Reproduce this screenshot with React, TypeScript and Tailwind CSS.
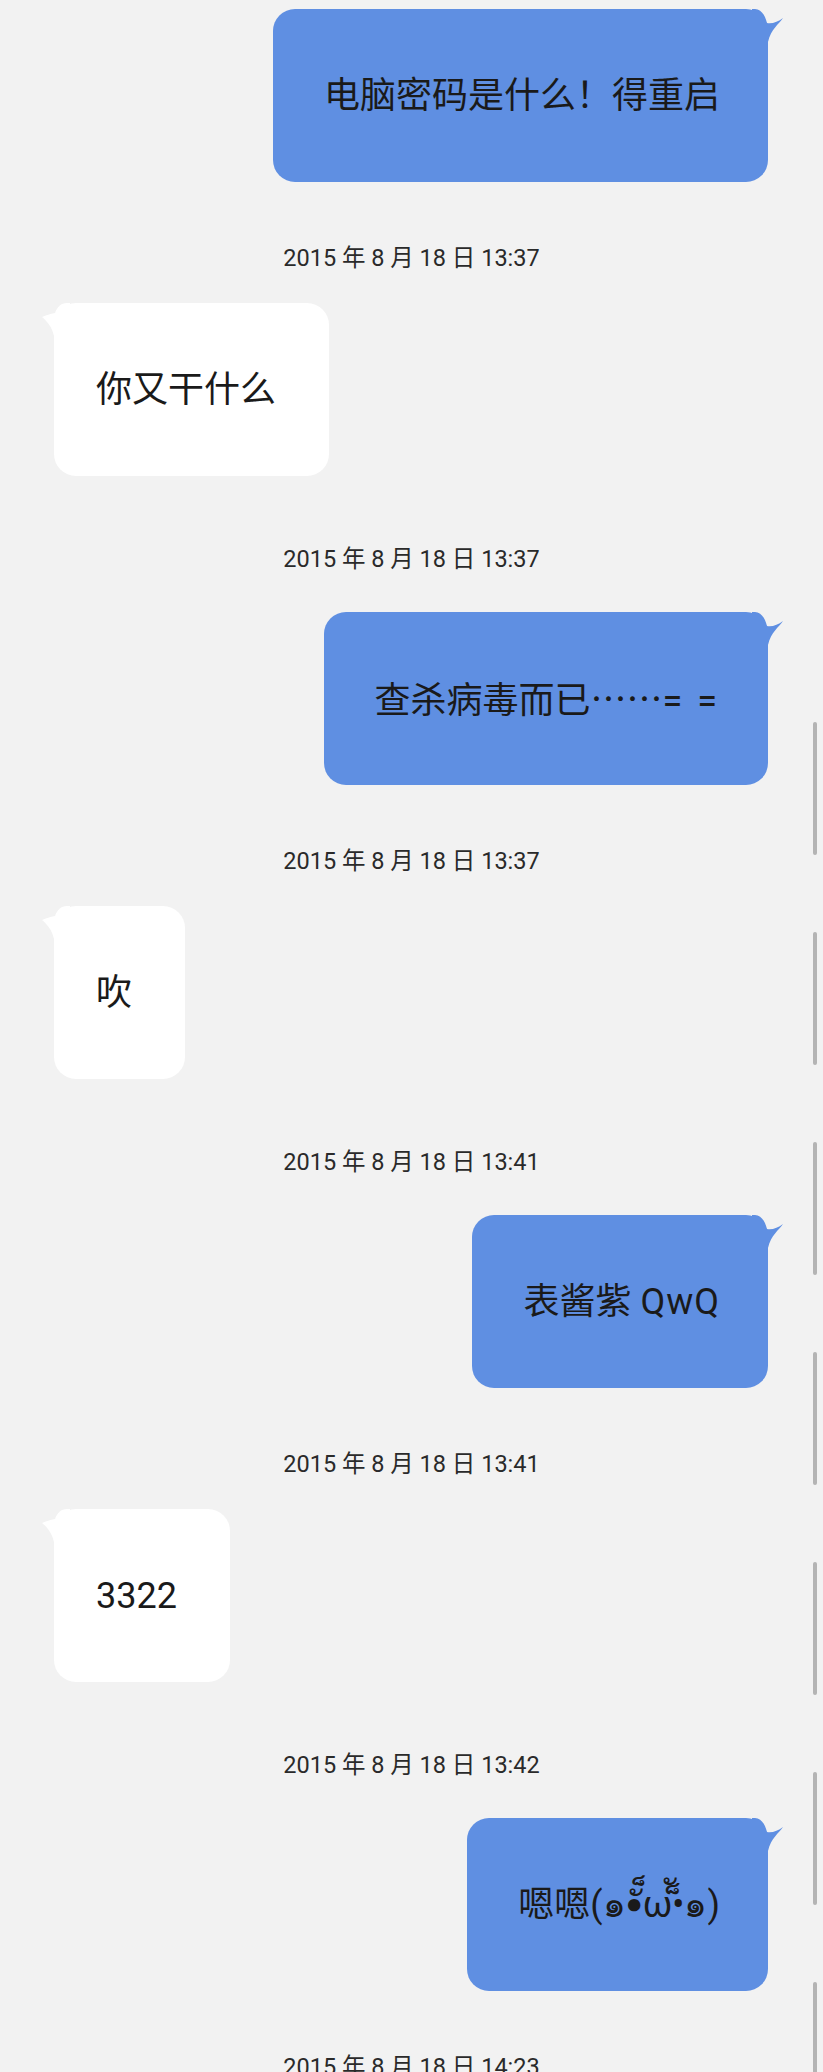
import React from 'react';

type Message = {
  side: 'me' | 'them';
  text: React.ReactNode;
  time: string;
};

const cjk = { fontFamily: '"Noto Sans CJK SC", sans-serif' };

const messages: Message[] = [
  { side: 'me', text: '电脑密码是什么！得重启', time: '2015 年 8 月 18 日 13:37' },
  { side: 'them', text: '你又干什么', time: '2015 年 8 月 18 日 13:37' },
  {
    side: 'me',
    text: (
      <>
        查杀病毒而已<span style={cjk}>……</span>
        <span className="tracking-[3px]">= =</span>
      </>
    ),
    time: '2015 年 8 月 18 日 13:37',
  },
  { side: 'them', text: '吹', time: '2015 年 8 月 18 日 13:41' },
  {
    side: 'me',
    text: (
      <>
        表酱紫 <span className="tracking-[1px]">QwQ</span>
      </>
    ),
    time: '2015 年 8 月 18 日 13:41',
  },
  { side: 'them', text: '3322', time: '2015 年 8 月 18 日 13:42' },
  { side: 'me', text: '嗯嗯(๑•ั็ω•็ั๑)', time: '2015 年 8 月 18 日 14:23' },
];

const MyTail = () => (
  <svg className="absolute top-0 -right-4 h-10 w-8" viewBox="0 0 32 40">
    <path d="M0 0 H3 C9 0 13 6 15 14 C20 15 26 13 31 9 C27 15 19 20 16 33 V40 H0 Z" fill="#5f8fe2" />
  </svg>
);

const TheirTail = () => (
  <svg className="absolute top-0 -left-4 h-10 w-8" viewBox="0 0 32 40">
    <path d="M32 0 H29 C23 0 19 4 17 10 C12 11 8 12 4 14 C9 18 14 24 16 33 V40 H32 Z" fill="#ffffff" />
  </svg>
);

const Bubble = ({ msg, first }: { msg: Message; first: boolean }) => {
  const mine = msg.side === 'me';
  const gap = first ? 'mt-[9px]' : mine ? 'mt-[38px]' : 'mt-[30px]';
  return (
    <div className={`flex ${mine ? 'justify-end pr-[55px]' : 'justify-start pl-[54px]'} ${gap}`}>
      <div
        className={`relative flex h-[173px] items-center rounded-[22px] text-[36px] leading-none text-[#1a1a1a] ${
          mine ? 'bg-[#5f8fe2] pl-[51px] pr-[48px]' : 'bg-white pl-[42px] pr-[53px]'
        }`}
      >
        {mine ? <MyTail /> : <TheirTail />}
        <span className="relative whitespace-nowrap">{msg.text}</span>
      </div>
    </div>
  );
};

export default function App() {
  return (
    <div
      className="relative h-[2072px] overflow-hidden bg-[#f2f2f2]"
      style={{ fontFamily: 'Roboto, "Noto Sans CJK SC", "Noto Sans", sans-serif' }}
    >
      {messages.map((m, i) => (
        <div key={i}>
          <Bubble msg={m} first={i === 0} />
          <div
            className={`h-[30px] text-center text-[23.5px] leading-[30px] text-[#2a2a2a] ${
              m.side === 'me' ? 'mt-[61px]' : 'mt-[68px]'
            }`}
          >
            {m.time}
          </div>
        </div>
      ))}

      {/* scroll indicator, stitched screenshot leftovers */}
      <div className="absolute top-[722px] right-[6px] flex flex-col gap-[77px]">
        {Array.from({ length: 7 }).map((_, i) => (
          <div key={i} className="h-[133px] w-[4px] rounded-full bg-[#b4b4b4]" />
        ))}
      </div>
    </div>
  );
}
